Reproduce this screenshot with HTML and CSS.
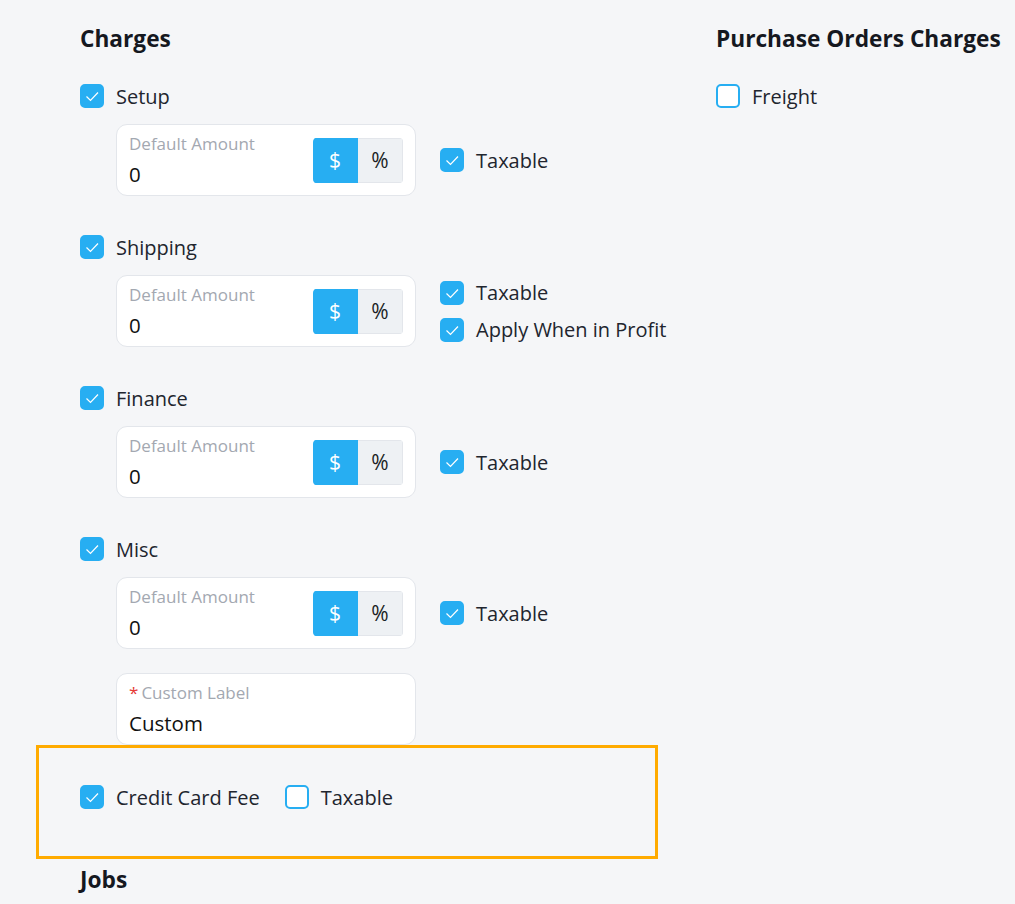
FILE: index.html
```html
<!DOCTYPE html>
<html>
  <head>
    <meta charset="UTF-8">
    <link rel="stylesheet" href="styles.css">
    <title>Charges Settings</title>
  </head>
  <body>
    <div class="page">
      <div class="col-left">
        <h2 class="title">Charges</h2>

        <div class="charge">
          <label class="check-row"><span class="box on"><svg viewBox="0 0 20 20"><path d="M4.5 10.5l4 4 7.5-8"/></svg></span>Setup</label>
          <div class="charge-body">
            <div class="field">
              <div class="field-text">
                <span class="field-label">Default Amount</span>
                <span class="field-value">0</span>
              </div>
              <div class="toggle"><span class="opt active">$</span><span class="opt">%</span></div>
            </div>
            <div class="options">
              <label class="check-row"><span class="box on"><svg viewBox="0 0 20 20"><path d="M4.5 10.5l4 4 7.5-8"/></svg></span>Taxable</label>
            </div>
          </div>
        </div>

        <div class="charge">
          <label class="check-row"><span class="box on"><svg viewBox="0 0 20 20"><path d="M4.5 10.5l4 4 7.5-8"/></svg></span>Shipping</label>
          <div class="charge-body">
            <div class="field">
              <div class="field-text">
                <span class="field-label">Default Amount</span>
                <span class="field-value">0</span>
              </div>
              <div class="toggle"><span class="opt active">$</span><span class="opt">%</span></div>
            </div>
            <div class="options">
              <label class="check-row"><span class="box on"><svg viewBox="0 0 20 20"><path d="M4.5 10.5l4 4 7.5-8"/></svg></span>Taxable</label>
              <label class="check-row"><span class="box on"><svg viewBox="0 0 20 20"><path d="M4.5 10.5l4 4 7.5-8"/></svg></span>Apply When in Profit</label>
            </div>
          </div>
        </div>

        <div class="charge">
          <label class="check-row"><span class="box on"><svg viewBox="0 0 20 20"><path d="M4.5 10.5l4 4 7.5-8"/></svg></span>Finance</label>
          <div class="charge-body">
            <div class="field">
              <div class="field-text">
                <span class="field-label">Default Amount</span>
                <span class="field-value">0</span>
              </div>
              <div class="toggle"><span class="opt active">$</span><span class="opt">%</span></div>
            </div>
            <div class="options">
              <label class="check-row"><span class="box on"><svg viewBox="0 0 20 20"><path d="M4.5 10.5l4 4 7.5-8"/></svg></span>Taxable</label>
            </div>
          </div>
        </div>

        <div class="charge last">
          <label class="check-row"><span class="box on"><svg viewBox="0 0 20 20"><path d="M4.5 10.5l4 4 7.5-8"/></svg></span>Misc</label>
          <div class="charge-body">
            <div class="field">
              <div class="field-text">
                <span class="field-label">Default Amount</span>
                <span class="field-value">0</span>
              </div>
              <div class="toggle"><span class="opt active">$</span><span class="opt">%</span></div>
            </div>
            <div class="options">
              <label class="check-row"><span class="box on"><svg viewBox="0 0 20 20"><path d="M4.5 10.5l4 4 7.5-8"/></svg></span>Taxable</label>
            </div>
          </div>
          <div class="charge-body">
            <div class="field">
              <div class="field-text">
                <span class="field-label"><span class="req">*</span>Custom Label</span>
                <span class="field-value">Custom</span>
              </div>
            </div>
          </div>
        </div>

        <div class="highlight">
          <div class="inline-checks">
            <label class="check-row"><span class="box on"><svg viewBox="0 0 20 20"><path d="M4.5 10.5l4 4 7.5-8"/></svg></span>Credit Card Fee</label>
            <label class="check-row"><span class="box"></span>Taxable</label>
          </div>
        </div>

        <h2 class="title jobs">Jobs</h2>
      </div>

      <div class="col-right">
        <h2 class="title">Purchase Orders Charges</h2>
        <div class="charge">
          <label class="check-row"><span class="box"></span>Freight</label>
        </div>
      </div>
    </div>
  </body>
</html>
```

FILE: styles.css
```css
body {
    margin: 0;
    background-color: #f5f6f8;
    font-family: "Open Sans", "Noto Sans", sans-serif;
    color: #21252e;
}

.page {
    display: flex;
    padding: 25px 0 0 80px;
}

.col-left {
    width: 636px;
}

.title {
    margin: 0;
    font-size: 22.7px;
    line-height: 28px;
    font-weight: 700;
    color: #15181f;
}

.charge {
    margin-top: 31px;
    margin-bottom: 39px;
}

.charge.last {
    margin-bottom: 0;
}

.check-row {
    display: flex;
    align-items: center;
    gap: 12px;
    height: 24px;
    font-size: 20px;
}

.box {
    width: 24px;
    height: 24px;
    box-sizing: border-box;
    border: 2px solid #27aef2;
    border-radius: 5px;
    background-color: #fff;
    flex-shrink: 0;
}

.box.on {
    background-color: #27aef2;
}

.box svg {
    display: block;
    width: 20px;
    height: 20px;
    fill: none;
    stroke: #fff;
    stroke-width: 1.2;
}

.charge-body {
    display: flex;
    align-items: center;
    gap: 24px;
    margin: 16px 0 0 36px;
}

.charge-body + .charge-body {
    margin-top: 24px;
}

.field {
    width: 300px;
    height: 72px;
    box-sizing: border-box;
    border: 1px solid #e3e6eb;
    border-radius: 11px;
    background-color: #fff;
    padding: 0 12px;
    display: flex;
    align-items: center;
    justify-content: space-between;
}

.field-text {
    display: flex;
    flex-direction: column;
    align-self: flex-start;
    padding-top: 8px;
}

.field-label {
    font-size: 17px;
    line-height: 22px;
    color: #a3a8b1;
}

.req {
    color: #e53935;
    margin-right: 3px;
}

.field-value {
    margin-top: 4px;
    font-size: 20.5px;
    line-height: 30px;
    font-weight: 500;
    color: #111;
}

.toggle {
    display: flex;
    height: 45px;
    border-radius: 4px;
    overflow: hidden;
}

.opt {
    width: 45px;
    display: flex;
    align-items: center;
    justify-content: center;
    font-size: 21px;
    background-color: #eef1f4;
    color: #1b1e24;
    border: 1px solid #e3e6eb;
    border-left: none;
    box-sizing: border-box;
}

.opt.active {
    background-color: #27aef2;
    border-color: #27aef2;
    color: #fff;
}

.options {
    display: flex;
    flex-direction: column;
    gap: 13px;
}

.highlight {
    margin: 0 0 0 -44px;
    width: 622px;
    box-sizing: border-box;
    border: 3px solid #ffab00;
    padding: 37px 0 47px 41px;
}

.inline-checks {
    display: flex;
    gap: 25px;
}

.jobs {
    margin-top: 7px;
}
```
